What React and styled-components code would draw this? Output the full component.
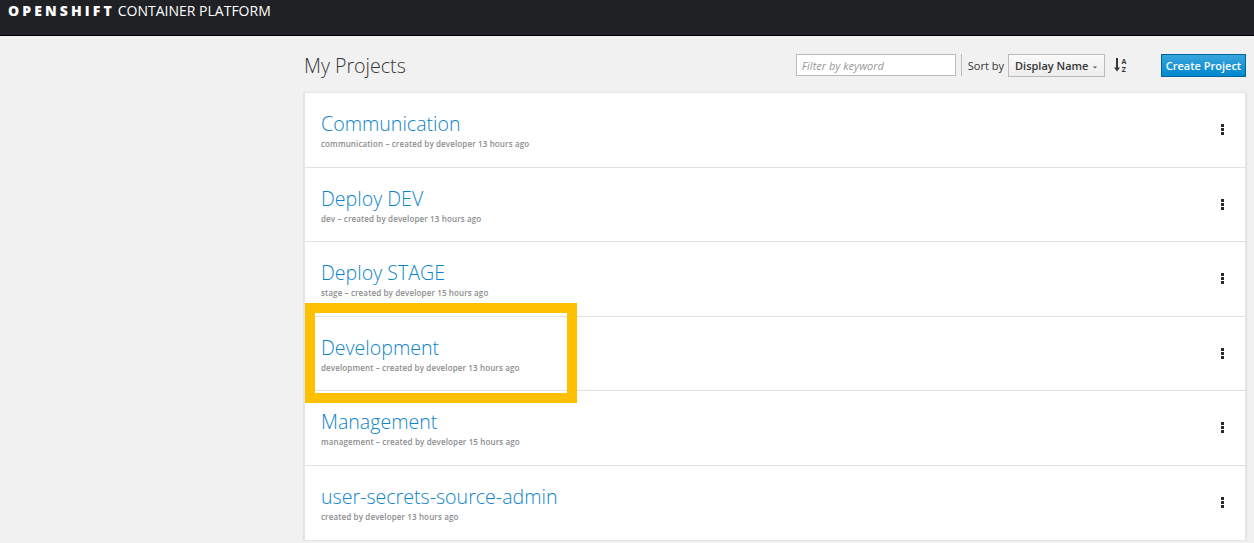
import React from "react"
import styled, { createGlobalStyle } from "styled-components"

const Global = createGlobalStyle`
  html, body {
    margin: 0;
    padding: 0;
    background: #f1f1f1;
    font-family: "Open Sans", "Noto Sans", sans-serif;
  }
`

const Masthead = styled.header`
  height: 36px;
  background: #1f2125;
  border-bottom: 1px solid #030303;
  display: flex;
  align-items: flex-start;
  padding: 2px 0 0 8px;
  box-sizing: border-box;
  gap: 3px;
`

const Brand = styled.span`
  color: #fff;
  font-size: 14px;
  font-weight: 800;
  letter-spacing: 3.1px;
  line-height: 18px;
`

const BrandSub = styled.span`
  color: #fff;
  font-size: 14px;
  font-weight: 400;
  line-height: 18px;
  letter-spacing: 0;
`

const Page = styled.main`
  padding: 0 8px 0 304px;
  position: relative;
`

const Toolbar = styled.div`
  display: flex;
  align-items: center;
  height: 56px;
`

const Heading = styled.h1`
  margin: 0;
  font-size: 19.6px;
  font-weight: 300;
  color: #363636;
  flex: 1;
  padding-top: 2px;
`

const Filter = styled.input`
  width: 160px;
  height: 22px;
  box-sizing: border-box;
  border: 1px solid #bbb;
  background: #fff;
  font-family: "Open Sans", sans-serif;
  font-size: 11px;
  padding: 0 5px;
  margin-top: 2px;
  &::placeholder {
    font-style: italic;
    color: #999;
  }
`

const Divider = styled.span`
  width: 1px;
  height: 22px;
  background: #bbb;
  margin: 2px 6px 0 5px;
`

const SortLabel = styled.span`
  font-size: 11px;
  color: #363636;
  margin: 2px 4px 0 0;
`

const Select = styled.div`
  width: 97px;
  height: 23px;
  box-sizing: border-box;
  border: 1px solid #bbb;
  background: linear-gradient(#fafafa, #ededed);
  display: flex;
  align-items: center;
  justify-content: space-between;
  padding: 0 6px;
  font-size: 11px;
  font-weight: 600;
  color: #363636;
  margin-top: 2px;
`

const Caret = styled.span`
  font-size: 7px;
  color: #555;
`

const SortIcon = styled.svg`
  margin: 2px 0 0 9px;
`

const PrimaryButton = styled.button`
  margin: 2px 0 0 33px;
  height: 23px;
  width: 85px;
  box-sizing: border-box;
  border: 1px solid #00659c;
  background: linear-gradient(#39a5dc, #0088ce);
  color: #fff;
  font-family: "Open Sans", sans-serif;
  font-size: 11px;
  font-weight: 600;
  padding: 0;
`

const List = styled.div`
  background: #fff;
  border: 1px solid #e5e5e5;
  box-shadow: 0 1px 2px rgba(0, 0, 0, 0.18);
  width: 940px;
`

const Row = styled.div`
  height: 74.5px;
  box-sizing: border-box;
  border-bottom: 1px solid ${(p) => (p.last ? "transparent" : "#e1e1e1")};
  display: flex;
  align-items: center;
  padding: 0 21px 0 16px;
`

const RowText = styled.div`
  flex: 1;
  padding-top: 3px;
`

const Title = styled.div`
  color: #0d84c9;
  font-size: 19.6px;
  font-weight: 300;
  line-height: 24px;
`

const Meta = styled.div`
  color: #8b8d8f;
  font-size: 8px;
  font-weight: 600;
  line-height: 12px;
  letter-spacing: 0.13px;
  margin-top: 2px;
`

const Kebab = styled.div`
  display: flex;
  flex-direction: column;
  gap: 1px;
  & > i {
    width: 3px;
    height: 3px;
    background: #292929;
  }
`

const Highlight = styled.div`
  position: absolute;
  left: 305px;
  top: 267px;
  width: 272px;
  height: 100px;
  box-sizing: border-box;
  border: 10px solid #ffc000;
  pointer-events: none;
`

const projects = [
  { name: "Communication", meta: "communication – created by developer 13 hours ago" },
  { name: "Deploy DEV", meta: "dev – created by developer 13 hours ago" },
  { name: "Deploy STAGE", meta: "stage – created by developer 15 hours ago" },
  { name: "Development", meta: "development – created by developer 13 hours ago" },
  { name: "Management", meta: "management – created by developer 15 hours ago" },
  { name: "user-secrets-source-admin", meta: "created by developer 13 hours ago" },
]

export default function App() {
  return (
    <>
      <Global />
      <Masthead>
        <Brand>OPENSHIFT</Brand>
        <BrandSub>CONTAINER PLATFORM</BrandSub>
      </Masthead>
      <Page>
        <Toolbar>
          <Heading>My Projects</Heading>
          <Filter placeholder="Filter by keyword" />
          <Divider />
          <SortLabel>Sort by</SortLabel>
          <Select>
            Display Name <Caret>&#8964;</Caret>
          </Select>
          <SortIcon width="14" height="16" viewBox="0 0 14 16">
            <path d="M3 1v11" stroke="#363636" strokeWidth="2" />
            <path d="M0 10.5l3 4 3-4z" fill="#363636" />
            <text x="7.5" y="7" fontSize="7" fontFamily="Open Sans, sans-serif" fontWeight="700" fill="#363636">A</text>
            <text x="7.8" y="15" fontSize="7" fontFamily="Open Sans, sans-serif" fontWeight="700" fill="#363636">Z</text>
          </SortIcon>
          <PrimaryButton>Create Project</PrimaryButton>
        </Toolbar>
        <List>
          {projects.map((p, i) => (
            <Row key={p.name} last={i === projects.length - 1}>
              <RowText>
                <Title>{p.name}</Title>
                <Meta>{p.meta}</Meta>
              </RowText>
              <Kebab>
                <i />
                <i />
                <i />
              </Kebab>
            </Row>
          ))}
        </List>
        <Highlight />
      </Page>
    </>
  )
}
